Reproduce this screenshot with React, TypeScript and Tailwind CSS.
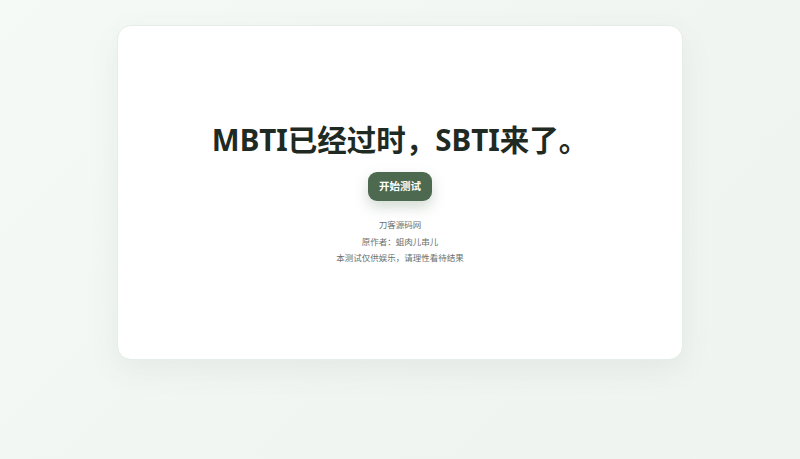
import React from "react";

export default function App() {
  return (
    <div
      className="w-[800px] h-[459px] flex items-start justify-center pt-[25px] bg-[linear-gradient(135deg,#f5faf6_0%,#f1f5f2_60%,#eff4f1_100%)]"
      style={{ fontFamily: '"Noto Sans", "Noto Sans CJK SC", sans-serif' }}
    >
      <div className="w-[566px] h-[335px] bg-white rounded-[14px] border border-[#e6ece7] shadow-[0_10px_30px_rgba(60,90,70,0.08)] flex flex-col items-center justify-center pt-[2px]">
        <h1 className="text-[29.5px] leading-[40px] font-bold text-[#1f2a22] tracking-[0px]">
          MBTI已经过时，SBTI来了。
        </h1>
        <button className="mt-[12px] h-[29px] px-[11px] rounded-[9px] bg-[#4d6a50] text-white text-[10.5px] font-bold shadow-[0_6px_14px_rgba(77,106,80,0.25)]">
          开始测试
        </button>
        <div className="mt-[16px] flex flex-col items-center text-[8.5px] leading-[16.5px] text-[#6b716c]">
          <p>刀客源码网</p>
          <p>原作者：蛆肉儿串儿</p>
          <p>本测试仅供娱乐，请理性看待结果</p>
        </div>
      </div>
    </div>
  );
}
